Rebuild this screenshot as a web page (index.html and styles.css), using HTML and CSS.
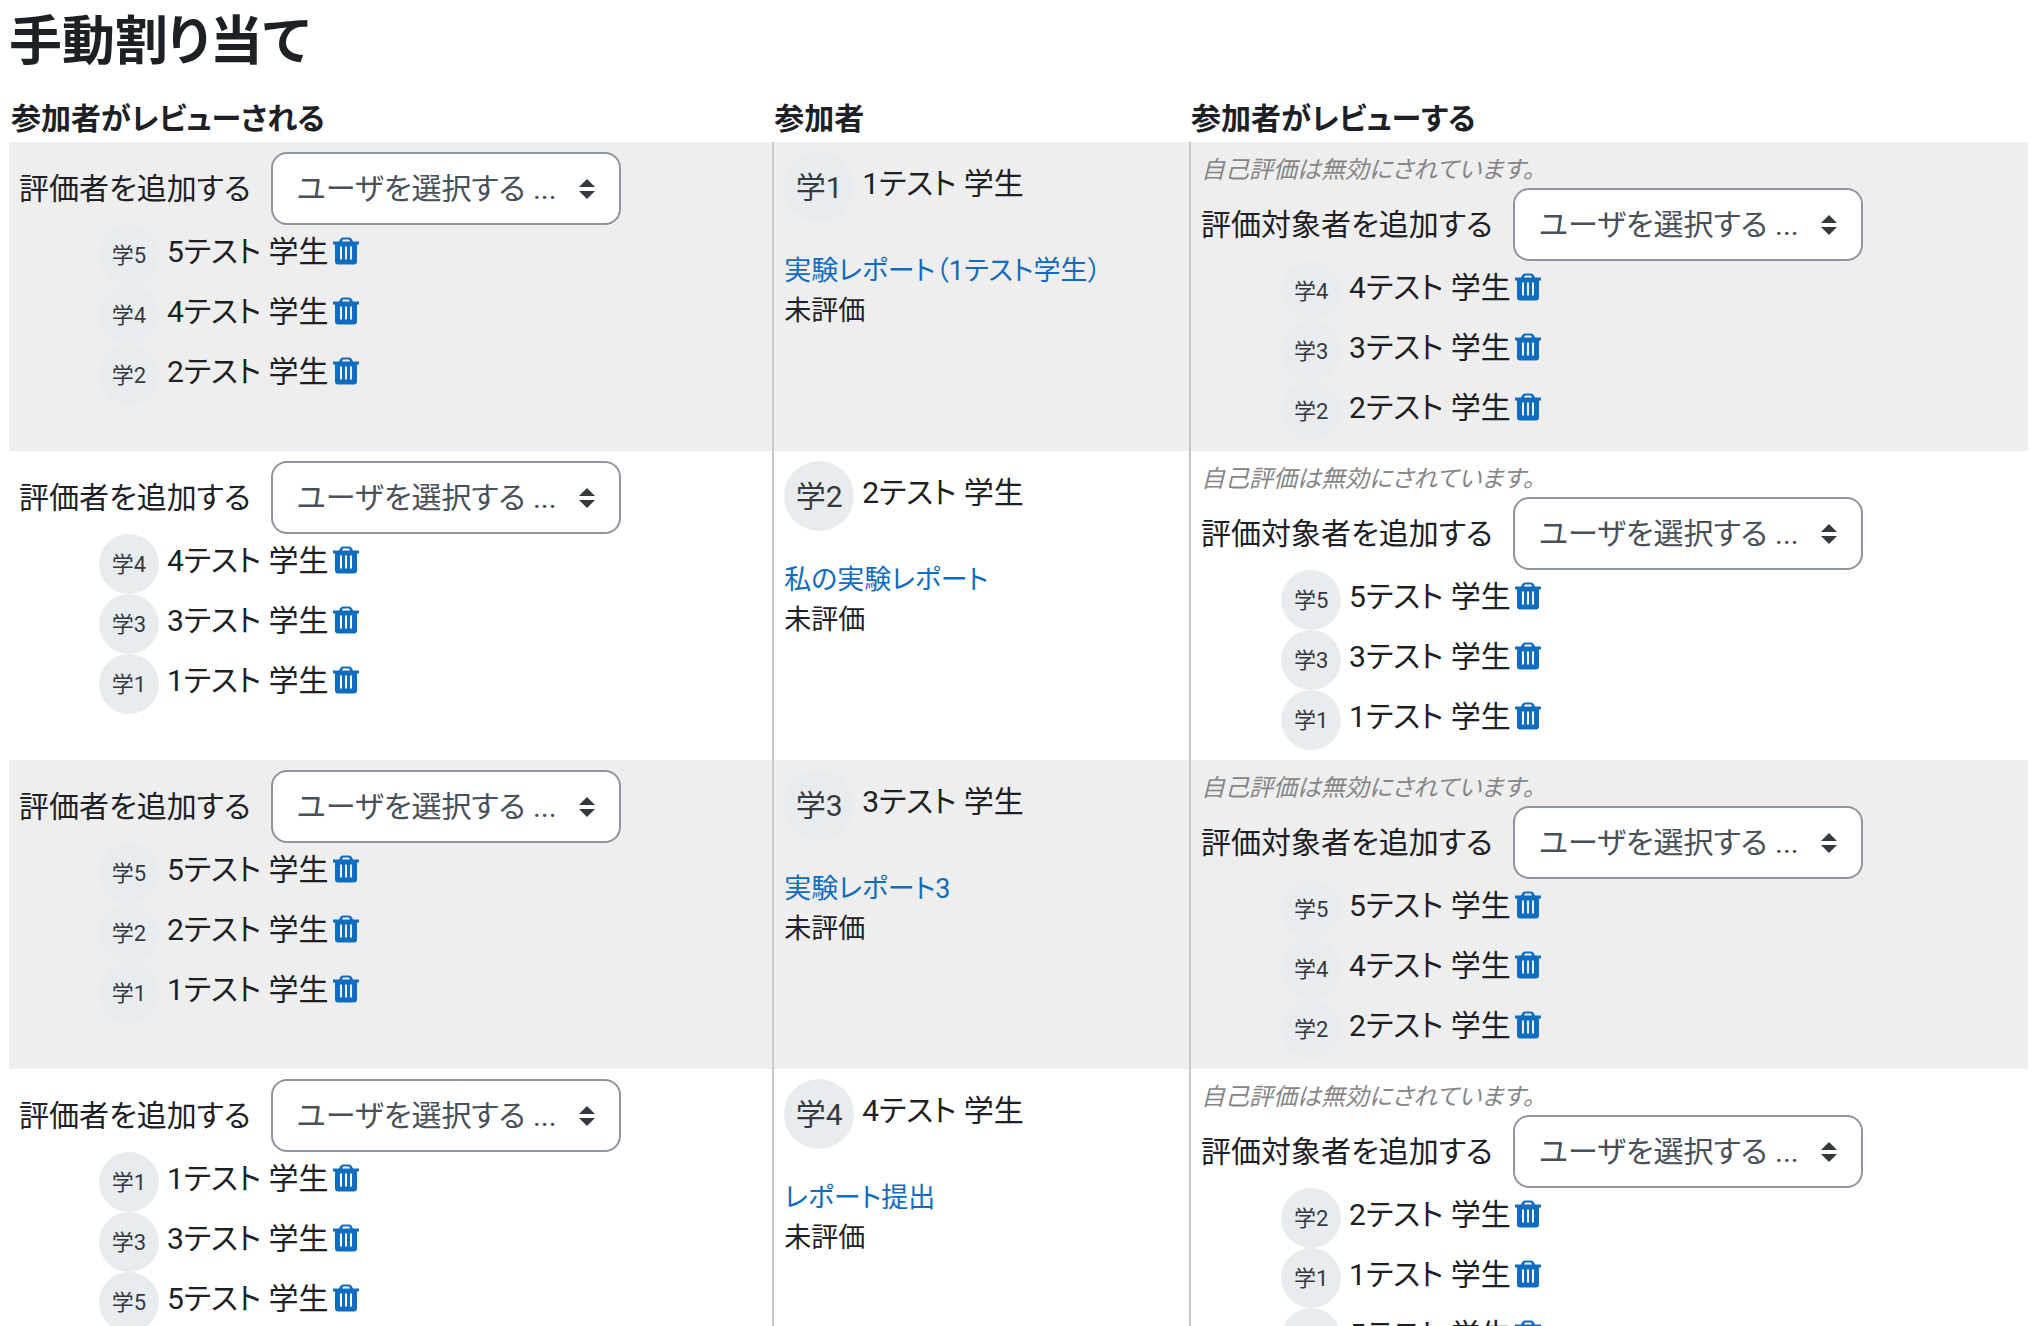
FILE: index.html
```
<!DOCTYPE html>
<html lang="ja">
<head>
<meta charset="utf-8">
<title>手動割り当て</title>
<link rel="stylesheet" href="styles.css">
</head>
<body>
<svg class="icons" aria-hidden="true">
  <symbol id="trash" viewBox="0 0 26 27">
    <path fill-rule="evenodd" d="M0 4h6l1-2q1-2 3-2h6q2 0 3 2l1 2h6v3h-2v17q0 3-3 3H5q-3 0-3-3V7H0zM9 4h8l-1-2h-6zM7 9v13h2V9zm5 0v13h2V9zm5 0v13h2V9z"/>
  </symbol>
</svg>
<main>
<h1>手動割り当て</h1>
<table class="allocations">
<colgroup><col class="col-by"><col class="col-user"><col class="col-of"></colgroup>
<thead><tr><th scope="col">参加者がレビューされる</th><th scope="col">参加者</th><th scope="col">参加者がレビューする</th></tr></thead>
<tbody id="rows"></tbody>
</table>
</main>
<script src="app.js"></script>
</body>
</html>
```
FILE: styles.css
```
* { box-sizing: border-box; }
body {
  margin: 0;
  color: #1d2125;
  background: #fff;
  font-family: Roboto, "Noto Sans CJK JP", sans-serif;
  font-size: 30px;
  line-height: 46px;
  font-feature-settings: "palt";
}
.icons { display: none; }
main { padding: 0 4px 0 9px; }
h1 { margin: 0; padding: 10px 0 18px; font-size: 53px; line-height: 64px; font-weight: 700; }
a { color: #0f6cbf; text-decoration: none; }
.allocations { width: 100%; border-collapse: separate; border-spacing: 0; table-layout: fixed; }
.col-by { width: 37.8%; }
.col-user { width: 20.65%; }
th { height: 50px; padding: 4px 2px 0; text-align: left; font-weight: 700; }
td { padding: 10px; vertical-align: top; }
td + td { border-left: 2px solid #c8c8c8; }
tbody tr:nth-child(odd) { background: #eee; }
.info { margin: 0; color: #868686; font-size: 24px; line-height: 36px; font-style: italic; }
.picker { display: flex; align-items: center; gap: 20px; }
.picker select {
  width: 350px; height: 73px; padding: 0 52px 0 24px;
  appearance: none;
  border: 2px solid #8f959e; border-radius: 16px;
  color: #495057; font: inherit; font-feature-settings: inherit;
  background: #fff url("data:image/svg+xml,%3Csvg xmlns='http://www.w3.org/2000/svg' viewBox='0 0 4 5'%3E%3Cpath fill='%23343a40' d='M2 0L0 2h4zm0 5L0 3h4z'/%3E%3C/svg%3E") no-repeat right 24px center / 16px 20px;
}
.people { margin: 0; padding: 0 0 0 80px; list-style: none; }
.person { display: flex; gap: 8px; height: 60px; }
.person .name { line-height: 54px; }
.avatar {
  flex: none; width: 60px; height: 60px; border-radius: 50%;
  background: #e9ecef; color: #343a40;
  font-size: 22px; line-height: 62px; text-align: center;
}
.remove { display: flex; margin-left: -4px; padding: 12px 0 0; border: 0; background: none; align-items: flex-start; cursor: pointer; }
.remove svg { width: 26px; height: 28px; fill: #0f6cbf; }
.owner { display: flex; gap: 8px; margin-bottom: 29px; }
.owner .name { line-height: 64px; }
.owner .avatar { width: 70px; height: 70px; font-size: 30px; line-height: 72px; }
.submission { font-size: 27px; line-height: 40px; }
.submission p { margin: 0; }
```
FILE: app.js
```
const rows = [
  { user: 1, title: "実験レポート（1テスト学生）", by: [5, 4, 2], of: [4, 3, 2] },
  { user: 2, title: "私の実験レポート", by: [4, 3, 1], of: [5, 3, 1] },
  { user: 3, title: "実験レポート3", by: [5, 2, 1], of: [5, 4, 2] },
  { user: 4, title: "レポート提出", by: [1, 3, 5], of: [2, 1, 5] },
];
const avatar = n => `<span class="avatar">学${n}</span>`;
const person = n => `<li class="person">${avatar(n)}<span class="name">${n}テスト 学生</span>
  <button class="remove" type="button" aria-label="削除"><svg aria-hidden="true"><use href="#trash"/></svg></button></li>`;
const picker = (id, label) => `<div class="picker"><label for="${id}">${label}</label>
  <select id="${id}"><option>ユーザを選択する ...</option></select></div>`;
const people = list => `<ul class="people">${list.map(person).join("")}</ul>`;
document.getElementById("rows").innerHTML = rows.map(r => `<tr>
  <td>${picker("by" + r.user, "評価者を追加する")}${people(r.by)}</td>
  <td><div class="owner">${avatar(r.user)}<span class="name">${r.user}テスト 学生</span></div>
    <div class="submission"><a href="#">${r.title}</a><p>未評価</p></div></td>
  <td><p class="info">自己評価は無効にされています。</p>${picker("of" + r.user, "評価対象者を追加する")}${people(r.of)}</td>
</tr>`).join("");
```
